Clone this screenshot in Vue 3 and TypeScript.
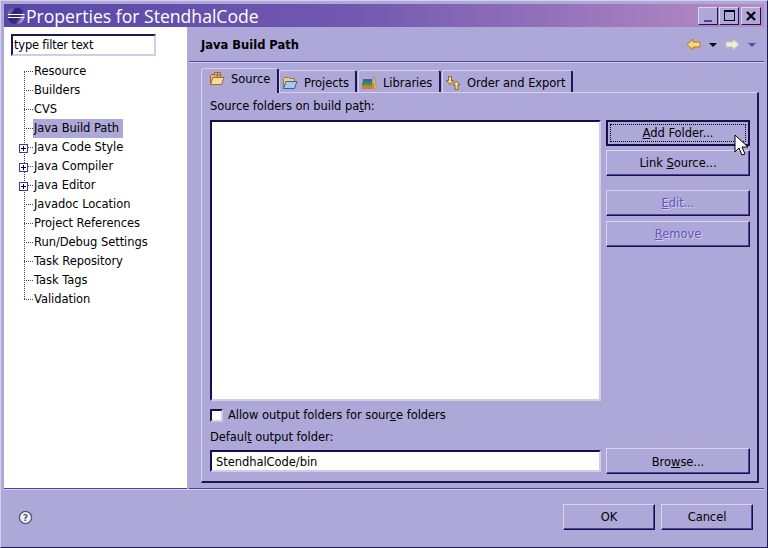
<script setup lang="ts">
interface TreeItem { label: string; plus?: boolean; selected?: boolean }
const tree: TreeItem[] = [
  { label: 'Resource' },
  { label: 'Builders' },
  { label: 'CVS' },
  { label: 'Java Build Path', selected: true },
  { label: 'Java Code Style', plus: true },
  { label: 'Java Compiler', plus: true },
  { label: 'Java Editor', plus: true },
  { label: 'Javadoc Location' },
  { label: 'Project References' },
  { label: 'Run/Debug Settings' },
  { label: 'Task Repository' },
  { label: 'Task Tags' },
  { label: 'Validation' },
]
</script>

<template>
  <div class="window">
    <header class="titlebar">
      <svg class="logo" width="18" height="18" viewBox="0 0 18 18">
        <defs>
          <linearGradient id="ball" x1="0" y1="0" x2="1" y2="0.6">
            <stop offset="0" stop-color="#c8c4f0" />
            <stop offset="0.4" stop-color="#2c2478" />
            <stop offset="0.75" stop-color="#3a2c88" />
            <stop offset="1" stop-color="#d8a8d8" />
          </linearGradient>
        </defs>
        <circle cx="9" cy="9" r="8.500" fill="url(#ball)" />
        <path d="M1 7.500h16.500M1 10.500h16.500" stroke="#fff" stroke-width="1.100" fill="none" />
      </svg>
      <span class="title">Properties for StendhalCode</span>
      <div class="winbtns">
        <span class="winbtn dim"><i class="min"></i></span>
        <span class="winbtn"><i class="max"></i></span>
        <span class="winbtn close">
          <svg width="12" height="12" viewBox="0 0 12 12"><path d="M2 2l8 8M10 2l-8 8" stroke="#000" stroke-width="2.200" /></svg>
        </span>
      </div>
    </header>

    <div class="body">
      <aside class="side">
        <div class="filter">type filter text</div>
        <ul class="tree">
          <li v-for="item in tree" :key="item.label" class="node">
            <span v-if="item.plus" class="plus"></span>
            <span class="label" :class="{ selected: item.selected }">{{ item.label }}</span>
          </li>
        </ul>
      </aside>

      <main class="page">
        <div class="page-head">
          <strong class="page-title">Java Build Path</strong>
          <div class="nav">
            <svg width="15" height="13" viewBox="0 0 15 13"><path d="M1 6.500l6-5.500v3h7v5H7v3z" fill="#f8d878" stroke="#b07818" /></svg>
            <span class="tri dark"></span>
            <svg width="15" height="13" viewBox="0 0 15 13"><path d="M14 6.500L8 1v3H1v5h7v3z" fill="#eeeede" stroke="#c4c4b4" /></svg>
            <span class="tri"></span>
          </div>
        </div>

        <div class="tabs">
          <div class="tab active">
            <svg width="16" height="14" viewBox="0 0 16 14">
              <path d="M1.500 12.500v-9l1-1h3V.5h6v5" fill="#e8b870" stroke="#a06828" />
              <path d="M8.500.5v5M5.500 3h6" stroke="#a06828" fill="none" />
              <path d="M1.500 12.500l2.500-7h11l-2.500 7z" fill="#f8dca0" stroke="#a06828" />
            </svg>
            <span>Source</span>
          </div>
          <div class="tab projects">
            <svg width="16" height="14" viewBox="0 0 16 14">
              <path d="M1.500 12.500v-10l1-1h4l1 1h5v3" fill="#f0d078" stroke="#907840" />
              <path d="M1.500 12.500l2.500-7h11l-2.500 7z" fill="#a8c8f0" stroke="#3860a8" />
            </svg>
            <span>Projects</span>
          </div>
          <div class="tab libraries">
            <svg width="16" height="14" viewBox="0 0 16 14">
              <rect x="2" y="3" width="9" height="3" fill="#287090" />
              <rect x="1" y="6" width="10" height="3" fill="#38905c" />
              <rect x="1" y="9" width="11" height="4" fill="#d07838" />
              <path d="M11 13l1.500-12h1l2 12h-2l-1-6-.5 6z" fill="#f0c840" stroke="#a07820" stroke-width="0.500" />
            </svg>
            <span>Libraries</span>
          </div>
          <div class="tab order">
            <svg width="16" height="14" viewBox="0 0 16 14">
              <path d="M3.500.5h3v4h2l-3.500 4-3.500-4h2z" fill="#f8d878" stroke="#7a5010" stroke-width="0.800" />
              <path d="M11.500 5l3.500 4h-2v4.500h-3V9H8z" fill="#f8d878" stroke="#7a5010" stroke-width="0.800" />
            </svg>
            <span>Order and Export</span>
          </div>
        </div>

        <section class="folder">
          <div class="folder-label">Source folders on build pa<u>t</u>h:</div>
          <div class="list-row">
            <div class="sunken listbox"></div>
            <div class="actions">
              <button class="btn default"><span class="focus"><u>A</u>dd Folder...</span></button>
              <button class="btn">Link <u>S</u>ource...</button>
              <button class="btn off edit"><span><u>E</u>dit...</span></button>
              <button class="btn off remove"><span><u>R</u>emove</span></button>
            </div>
          </div>
          <label class="check">
            <span class="box"></span>
            <span>Allow output folders for sour<u>c</u>e folders</span>
          </label>
          <div class="output-label">Defaul<u>t</u> output folder:</div>
          <div class="output-row">
            <div class="sunken field">StendhalCode/bin</div>
            <button class="btn browse">Bro<u>w</u>se...</button>
          </div>
        </section>
      </main>
    </div>

    <footer class="foot">
      <svg class="help" width="15" height="15" viewBox="0 0 16 16">
        <circle cx="8" cy="8" r="6.500" fill="#f2f2f8" stroke="#4a5a80" stroke-width="1.500" />
        <text x="8" y="12" text-anchor="middle" class="help-q">?</text>
      </svg>
      <div class="foot-btns">
        <button class="btn ok">OK</button>
        <button class="btn ok">Cancel</button>
      </div>
    </footer>

    <svg class="cursor" width="16" height="24" viewBox="0 0 16 24">
      <path d="M1 1v17l4-4 3 7 3-1-3-7h6z" fill="#fff" stroke="#000" stroke-width="1" />
    </svg>
  </div>
</template>

<style scoped>
.window {
  position: relative;
  box-sizing: border-box;
  width: 768px;
  height: 548px;
  display: flex;
  flex-direction: column;
  padding: 3px;
  background: #aea8d8;
  border: 1px solid;
  border-color: #d4d1ec #1c1858 #1c1858 #d4d1ec;
  font: 11.500px "DejaVu Sans", Tahoma, sans-serif;
  letter-spacing: -0.050px;
  color: #000;
  overflow: hidden;
}
.titlebar {
  flex: none;
  height: 23px;
  display: flex;
  align-items: center;
  padding: 0 3px;
  gap: 1px;
  background: linear-gradient(90deg, #5848a8 0%, #7058b0 45%, #b88cc4 100%);
}
.title {
  color: #fff;
  font: 17.600px "Open Sans", "DejaVu Sans", sans-serif;
  letter-spacing: 0;
  white-space: nowrap;
}
.winbtns { margin-left: auto; display: flex; gap: 1px; padding-right: 0; }
.winbtn {
  box-sizing: border-box;
  width: 20px;
  height: 18px;
  display: flex;
  align-items: center;
  justify-content: center;
  background: #aea8d8;
  border: 1px solid;
  border-color: #d8d5ef #1a1650 #1a1650 #d8d5ef;
}
.close { margin-left: 1px; }
.min { width: 8px; height: 2px; margin-top: 10px; background: #5040a0; }
.max { box-sizing: border-box; width: 11px; height: 11px; border: 1px solid #000; border-top-width: 2px; }
.body { flex: 1; display: flex; min-height: 0; }
.side {
  flex: none;
  width: 183px;
  box-sizing: border-box;
  background: #fff;
  padding: 7px 0 0 7px;
  border-bottom: 1px solid #5040a0;
}
.filter {
  box-sizing: border-box;
  width: 145px;
  height: 22px;
  line-height: 18px;
  padding-left: 1px;
  letter-spacing: -0.200px;
  border: 2px solid;
  border-color: #1c1858 #d0cdea #d0cdea #1c1858;
}
.tree {
  list-style: none;
  margin: 6px 0 0;
  padding: 0;
  position: relative;
}
.tree::before {
  content: "";
  position: absolute;
  left: 13px;
  top: 9px;
  height: 228px;
  border-left: 1px dotted #4038a0;
}
.node {
  position: relative;
  height: 19px;
  display: flex;
  align-items: center;
  padding-left: 22px;
}
.node::before {
  content: "";
  position: absolute;
  left: 13px;
  width: 9px;
  top: 9px;
  border-top: 1px dotted #4038a0;
}
.label { padding: 0 1px; line-height: 19px; white-space: nowrap; position: relative; }
.selected { background: #aea8d8; padding-right: 4px; }
.plus {
  position: absolute;
  left: 8px;
  top: 6px;
  z-index: 1;
  box-sizing: border-box;
  width: 9px;
  height: 9px;
  border: 1px solid #4038a0;
  background:
    linear-gradient(#000, #000) center / 5px 1px no-repeat,
    linear-gradient(#000, #000) center / 1px 5px no-repeat,
    #fff;
}
.page {
  flex: 1;
  min-width: 0;
  margin-left: 2px;
  box-sizing: border-box;
  display: flex;
  flex-direction: column;
  border-bottom: 1px solid #5040a0;
  padding-bottom: 5px;
}
.page-head {
  flex: none;
  box-sizing: border-box;
  height: 35px;
  display: flex;
  align-items: center;
  justify-content: space-between;
  padding: 1px 8px 0 12px;
  border-bottom: 1px solid #5040a0;
  box-shadow: 0 1px 0 #d4d1ec;
}
.page-title { font-weight: 700; letter-spacing: 0; }
.nav { display: flex; align-items: center; gap: 8px; }
.tri { width: 0; height: 0; border: 4px solid transparent; border-top: 4px solid #5a48b0; border-bottom: 0; }
.tri.dark { border-top-color: #000; }
.tabs {
  flex: none;
  display: flex;
  align-items: flex-end;
  height: 25px;
  margin: 5px 0 0 12px;
  position: relative;
  z-index: 1;
}
.tab {
  box-sizing: border-box;
  height: 22px;
  display: flex;
  align-items: center;
  gap: 6px;
  padding: 3px 0 0 2px;
  border-top: 1px solid #d4d1ec;
  border-left: 1px solid #d4d1ec;
  border-right: 2px solid #1c1858;
  border-radius: 3px 3px 0 0;
  white-space: nowrap;
}
.tab.active { width: 78px; height: 25px; padding: 0 0 4px 7px; background: #aea8d8; margin-bottom: -1px; }
.tab.projects { width: 78px; }
.tab.libraries { width: 83px; margin-left: 1px; }
.tab.order { width: 131px; margin-left: 1px; }
.folder {
  flex: 1;
  min-height: 0;
  box-sizing: border-box;
  display: flex;
  flex-direction: column;
  margin: 0 5px 0 12px;
  padding: 5px 7px 0 8px;
  border: 1px solid;
  border-color: #d4d1ec #1c1858 #1c1858 #d4d1ec;
  border-right-width: 2px;
  border-bottom-width: 2px;
}
.folder > * { flex: none; }
.folder-label { line-height: 16px; height: 22px; }
.list-row { display: flex; gap: 5px; }
.sunken {
  box-sizing: border-box;
  width: 391px;
  background: #fff;
  border: 2px solid;
  border-color: #14104a #d0cdea #d0cdea #14104a;
}
.listbox { height: 281px; }
.actions { flex: 1; display: flex; flex-direction: column; gap: 4px; }
.btn {
  box-sizing: border-box;
  flex: none;
  width: 144px;
  height: 26px;
  padding: 0;
  font: inherit;
  letter-spacing: inherit;
  color: #000;
  background: #aea8d8;
  border: 1px solid;
  border-color: #d8d5ef #14104a #14104a #d8d5ef;
  box-shadow: inset -1px -1px 0 #5040a0;
}
.btn.browse { padding-top: 1px; }
.btn.default {
  border-color: #14104a;
  box-shadow: inset 0 0 0 1px #14104a;
  padding: 3px;
}
.focus {
  display: flex;
  align-items: center;
  justify-content: center;
  height: 100%;
  border: 1px dotted #000;
  box-sizing: border-box;
}
.off { color: #6256bc; }
.off span { text-shadow: 1px 1px 0 #d4d1ec; }
.edit { margin-top: 10px; }
.remove { margin-top: 1px; }
.check { display: flex; align-items: center; gap: 5px; margin-top: 6px; height: 16px; }
.box {
  box-sizing: border-box;
  width: 13px;
  height: 13px;
  background: #fff;
  border: 2px solid;
  border-color: #14104a #d0cdea #d0cdea #14104a;
}
.output-label { margin-top: 6px; height: 19px; line-height: 16px; }
.output-row { display: flex; gap: 5px; align-items: center; }
.field { height: 22px; line-height: 20px; padding-left: 4px; }
.foot {
  flex: none;
  height: 55px;
  box-sizing: border-box;
  display: flex;
  align-items: center;
  justify-content: space-between;
  padding: 0 11px 0 14px;
  border-top: 1px solid #d4d1ec;
}
.help-q { font: bold 10px "DejaVu Sans", sans-serif; fill: #4a5a80; }
.foot-btns { display: flex; gap: 6px; }
.ok { width: 92px; }
.cursor { position: absolute; left: 733px; top: 133px; }
</style>
